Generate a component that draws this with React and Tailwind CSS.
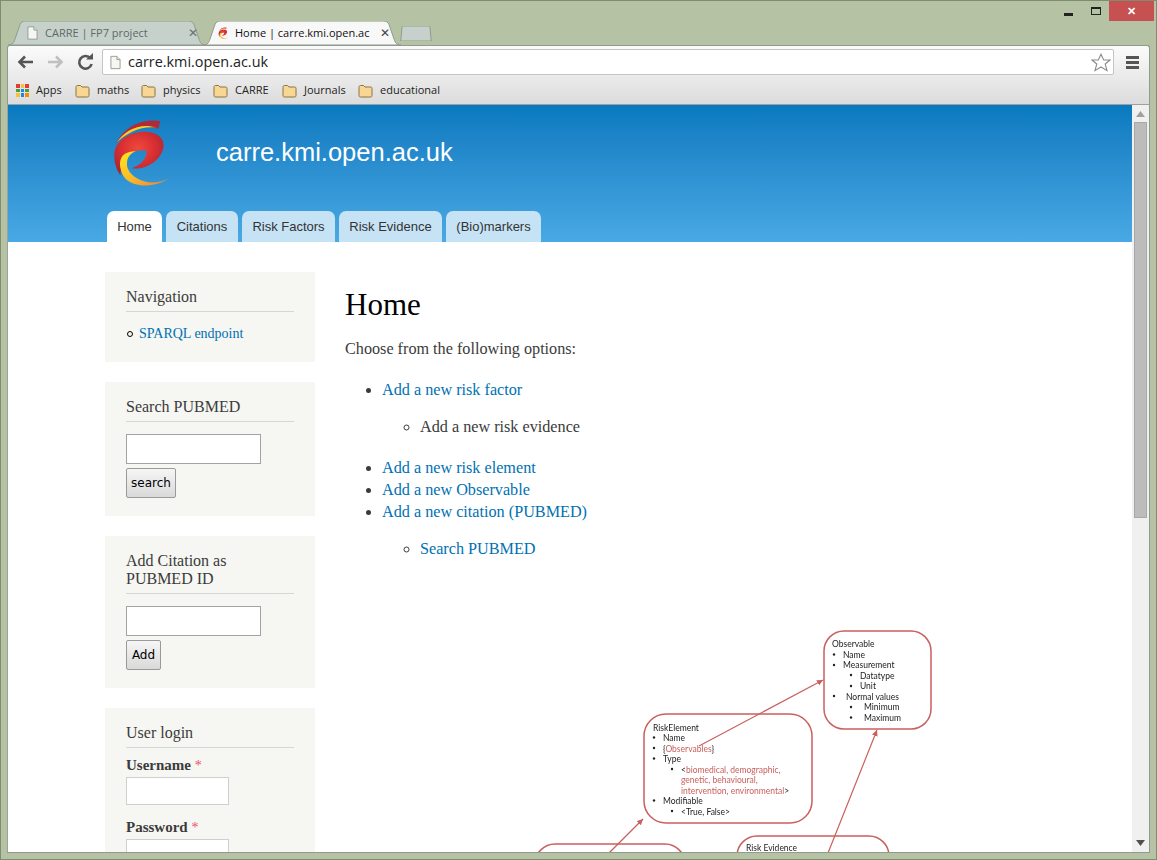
import React from "react";

const serif = "font-['Liberation_Serif',serif]";

function Logo({ className, id = "m" }) {
  return (
    <svg viewBox="0 0 210 225" className={className}>
      <defs>
        <radialGradient id={`lg${id}`} cx="0.48" cy="0.38" r="0.62">
          <stop offset="0" stopColor="#f04a3a" />
          <stop offset="0.55" stopColor="#d92f34" />
          <stop offset="1" stopColor="#a9262f" />
        </radialGradient>
        <linearGradient id={`ly${id}`} x1="0.1" y1="0" x2="0.9" y2="1">
          <stop offset="0" stopColor="#ffe41c" />
          <stop offset="0.55" stopColor="#fbb92a" />
          <stop offset="1" stopColor="#e8873a" />
        </linearGradient>
      </defs>
      <path d="M33 85C55 40 105 8 166 18L160 41C110 26 70 45 33 85Z" fill="#b12a37" />
      <path d="M35 82C60 45 105 22 156 38C110 32 72 50 35 82Z" fill={`url(#ly${id})`} />
      <path d="M28 118C30 78 70 50 122 50C160 52 180 72 175 98C168 135 125 165 80 160C105 150 125 135 125 108C95 100 62 118 52 148C48 160 46 172 47 182C34 165 27 140 28 118Z" fill={`url(#lg${id})`} />
      <path d="M92 109C68 118 62 140 68 160C82 195 138 218 192 190C150 218 90 220 60 190C40 160 40 128 60 116C70 111 82 108 92 109Z" fill={`url(#ly${id})`} />
    </svg>
  );
}

function Folder() {
  return (
    <svg width="15" height="14" viewBox="0 0 15 14" className="shrink-0">
      <path d="M1 3.5C1 2 1.6 1.5 2.5 1.5H5.5L7 3H12.5C13.5 3 14 3.5 14 4.5V11.5C14 12.5 13.5 13 12.5 13H2.5C1.5 13 1 12.5 1 11.5Z" fill="#f8d694" stroke="#8a7440" />
    </svg>
  );
}

function DocIcon({ className }) {
  return (
    <svg viewBox="0 0 12 15" className={className}>
      <path d="M1 .8H7.5L11 4.3V14.2H1Z" fill="#f6f6f2" stroke="#8f9a8f" />
      <path d="M7.5 .8V4.3H11" fill="#e6e6e6" stroke="#8f9a8f" />
    </svg>
  );
}

function TabShape({ fill, stroke }) {
  return (
    <svg className="absolute inset-0 h-full w-full" viewBox="0 0 200 25" preserveAspectRatio="none">
      <path d="M0 25C5 25 6 22 7 19L12 4C13 1 15 0 18 0H182C185 0 187 1 188 4L193 19C194 22 195 25 200 25Z" fill={fill} stroke={stroke} vectorEffect="non-scaling-stroke" />
    </svg>
  );
}

function Bookmark({ label, w }) {
  return (
    <div className="flex items-center gap-[7px]" style={{ width: w }}>
      <Folder />
      <span>{label}</span>
    </div>
  );
}

function Block({ title, children, className = "" }) {
  return (
    <div className={`bg-[#f6f6f2] px-[21px] pt-[16px] w-[210px] ${className}`}>
      <h2 className="text-[16px] leading-[18px] text-[#3b3b3b] pb-[5px] border-b border-[#d6d6d6]">{title}</h2>
      {children}
    </div>
  );
}

function Field() {
  return <input className="block w-[135px] h-[30px] bg-white border border-[#a3a3a3]" />;
}

function Btn({ label, w }) {
  return (
    <button style={{ width: w }} className="block mt-[4px] h-[30px] rounded-[2px] border border-[#9a9a9a] bg-gradient-to-b from-[#f6f6f6] to-[#d9d9d9] text-[12px] text-black font-['DejaVu_Sans',sans-serif]">
      {label}
    </button>
  );
}

const A = ({ children }) => <a className="text-[#0071b3]">{children}</a>;

function Diagram() {
  const red = "#c9605d";
  const t = (x, y, s, fill = "#222") => (
    <text x={x} y={y} fill={fill} fontSize="8.5" fontFamily="Lato,sans-serif">{s}</text>
  );
  const dot = (x, y) => <circle cx={x} cy={y} r="1.2" fill="#222" />;
  const R = ({ children }) => <tspan fill={red}>{children}</tspan>;
  return (
    <svg width="420" height="240" viewBox="530 620 420 240" className="block ml-[185px] mt-[60px] blur-[0.35px]">
      <defs>
        <marker id="ah" markerWidth="7" markerHeight="7" refX="5" refY="2.5" orient="auto">
          <path d="M0 0L5 2.5L0 5Z" fill={red} />
        </marker>
      </defs>
      <g fill="#fff" stroke={red} strokeWidth="1.5">
        <rect x="824" y="631" width="107" height="98" rx="20" />
        <rect x="644" y="714" width="168" height="109" rx="22" />
        <rect x="535" y="844" width="150" height="60" rx="20" />
        <rect x="737" y="836" width="152" height="60" rx="20" />
      </g>
      <g stroke={red} strokeWidth="1.2">
        <line x1="699" y1="746" x2="823" y2="680" markerEnd="url(#ah)" />
        <line x1="609" y1="853" x2="643" y2="819" markerEnd="url(#ah)" />
        <line x1="828" y1="853" x2="877" y2="730" markerEnd="url(#ah)" />
      </g>
      {t(832, 647, "Observable")}
      {dot(834, 654.5)}{t(843, 658, "Name")}
      {dot(834, 665)}{t(843, 668, "Measurement")}
      {dot(851, 675)}{t(860, 678.5, "Datatype")}
      {dot(851, 686)}{t(860, 689, "Unit")}
      {dot(834, 696)}{t(846, 699.5, "Normal values")}
      {dot(851, 707)}{t(864, 710, "Minimum")}
      {dot(851, 717.5)}{t(864, 721, "Maximum")}

      {t(653, 731, "RiskElement")}
      {dot(654, 737.5)}{t(663, 741, "Name")}
      {dot(654, 748)}{t(663, 752, <>{"{"}<R>Observables</R>{"}"}</>)}
      {dot(654, 758.5)}{t(663, 762, "Type")}
      {dot(672, 769)}{t(681, 773, <>{"<"}<R>biomedical, demographic,</R></>)}
      {t(681, 783, "genetic, behavioural,", red)}
      {t(681, 793.5, <><R>intervention, environmental</R>{">"}</>)}
      {dot(654, 800.5)}{t(663, 804, "Modifiable")}
      {dot(672, 811)}{t(681, 814.5, "<True, False>")}
      {t(746, 851, "Risk Evidence")}
    </svg>
  );
}

export default function App() {
  return (
    <div className="w-[1157px] h-[860px] overflow-hidden bg-[#b5c2a3] border border-[#7f8c70] flex flex-col font-['Open_Sans',sans-serif]">
      {/* title bar */}
      <div className="h-[44px] shrink-0 flex relative">
        <div className="flex items-end pl-[7px] h-full">
          <div className="relative w-[198px] h-[24px] text-[11px] text-[#5d6a62]">
            <TabShape fill="#c7d1cc" stroke="#8f9b8f" />
            <div className="relative flex items-center h-full pl-[19px] pr-[8px]">
              <DocIcon className="w-[11px] h-[14px] mr-[7px]" />
              <span className="flex-1">CARRE | FP7 project</span>
              <span className="text-[12px] text-[#67726a]">✕</span>
            </div>
          </div>
          <div className="relative w-[198px] -ml-[3px] h-[24px] text-[11px] text-[#111]">
            <TabShape fill="#f8f8f8" stroke="#8f9b8f" />
            <div className="relative flex items-center h-full pl-[14px] pr-[11px]">
              <Logo id="f" className="w-[12px] h-[14px] mr-[6px] shrink-0" />
              <span className="flex-1 whitespace-nowrap">Home | carre.kmi.open.ac</span>
              <span className="text-[12px] text-[#444] ml-[5px]">✕</span>
            </div>
          </div>
          <div className="relative w-[32px] h-[15px] mb-[4px] -ml-px">
            <TabShape fill="#c7d1cc" stroke="#8f9b8f" />
          </div>
        </div>
        <div className="ml-auto mr-[2px] flex items-start">
          <div className="w-[9px] h-[3px] bg-[#222] mt-[12px] mr-[18px]" />
          <div className="w-[10px] h-[8px] border border-[#222] border-t-2 mt-[6px] mr-[8px]" />
          <div className="w-[45px] h-[20px] bg-[#c75050] flex items-center justify-center text-white text-[11px] font-bold">✕</div>
        </div>
      </div>

      {/* window */}
      <div className="ml-[6px] w-[1143px] flex-1 min-h-0 flex flex-col">
        <div className="shrink-0 h-[60px] rounded-t-[3px] border-t border-x border-[#8f9b8f] bg-gradient-to-b from-[#fbfbfb] to-[#dcdcdc] border-b border-b-[#a0a0a0]">
          <div className="h-[32px] flex items-center relative">
            <svg width="90" height="20" viewBox="0 0 90 20" className="ml-[8px] shrink-0">
              <path d="M17 10H4M9 4.5L3.5 10L9 15.5" fill="none" stroke="#555" strokeWidth="2.6" />
              <path d="M32 10H45M40 4.5L45.5 10L40 15.5" fill="none" stroke="#c0c0c0" strokeWidth="2.6" />
              <path d="M74.5 6.5A6.3 6.3 0 1 0 75.6 12" fill="none" stroke="#555" strokeWidth="2.6" />
              <path d="M70 7.5H77V1Z" fill="#555" />
            </svg>
            <div className="ml-[-4px] w-[1012px] h-[26px] bg-white border border-[#c4c4c4] rounded-[2px] flex items-center pl-[7px]">
              <DocIcon className="w-[11px] h-[15px] mr-[7px]" />
              <span className="text-[14.4px] text-[#222]">carre.kmi.open.ac.uk</span>
              <svg width="20" height="19" viewBox="0 0 20 19" className="ml-auto mr-[2px]">
                <path d="M10 1.2L12.7 7H19L14.2 11L16 17.6L10 14L4 17.6L5.8 11L1 7H7.3Z" fill="#fff" stroke="#8a8a8a" strokeWidth="1.1" />
              </svg>
            </div>
            <div className="ml-[12px] w-[13px] flex flex-col gap-[2px]">
              <div className="h-[3px] bg-[#555]" /><div className="h-[3px] bg-[#555]" /><div className="h-[3px] bg-[#555]" />
            </div>
          </div>
          <div className="h-[27px] flex items-center pl-[8px] pb-[2px] text-[11px] text-[#222]">
            <div className="flex items-center gap-[7px] w-[59px]">
              <div className="grid grid-cols-3 gap-px w-[13px] shrink-0">
                {["#e53935","#fbc02d","#e53935","#43a047","#1e88e5","#43a047","#fbc02d","#1e88e5","#fb8c00"].map((c, i) => (
                  <div key={i} className="h-[3.5px]" style={{ background: c }} />
                ))}
              </div>
              <span>Apps</span>
            </div>
            <Bookmark label="maths" w={66} />
            <Bookmark label="physics" w={72} />
            <Bookmark label="CARRE" w={69} />
            <Bookmark label="Journals" w={76} />
            <Bookmark label="educational" w={90} />
          </div>
        </div>

        {/* page */}
        <div className="h-[747px] shrink-0 flex bg-white overflow-hidden border-l border-[#9aa59a]">
          <div className="w-[1124px] shrink-0 overflow-hidden">
            <header className="h-[137px] bg-gradient-to-b from-[#0779bf] to-[#48a9e4] flex flex-col font-['Liberation_Sans',sans-serif]">
              <div className="flex-1 flex pl-[97px]">
                <Logo className="w-[70px] h-[75px] mt-[10px] shrink-0" />
                <div className="ml-[41px] mt-[32px] text-[25.5px] leading-[30px] text-white">carre.kmi.open.ac.uk</div>
              </div>
              <nav className="h-[31px] flex gap-[4px] pl-[99px] text-[13px] text-[#333]">
                {[["Home",55,"bg-white"],["Citations",72,"bg-[#c6e2f5]"],["Risk Factors",93,"bg-[#c6e2f5]"],["Risk Evidence",103,"bg-[#c6e2f5]"],["(Bio)markers",95,"bg-[#c6e2f5]"]].map(([l,w,bg]) => (
                  <div key={l} style={{ width: w }} className={`${bg} rounded-t-[7px] flex items-center justify-center`}>{l}</div>
                ))}
              </nav>
            </header>
            <div className={`flex ${serif} text-[#3b3b3b]`}>
              <aside className="ml-[97px] mt-[30px] w-[210px] shrink-0 flex flex-col gap-[20px]">
                <Block title="Navigation" className="h-[90px]">
                  <div className="flex items-center mt-[11px] text-[14px] leading-[22px]">
                    <span className="w-[6px] h-[6px] rounded-full border border-black ml-px mr-[6px]" />
                    <A>SPARQL endpoint</A>
                  </div>
                </Block>
                <Block title="Search PUBMED" className="h-[134px]">
                  <div className="mt-[12px]"><Field /><Btn label="search" w={50} /></div>
                </Block>
                <Block title={<>Add Citation as<br />PUBMED ID</>} className="h-[152px]">
                  <div className="mt-[12px]"><Field /><Btn label="Add" w={35} /></div>
                </Block>
                <Block title="User login" className="h-[200px]">
                  <div className="mt-[7px] text-[15px] leading-[20px] font-bold">Username <span className="text-[#f0506a] text-[14px] font-normal">*</span></div>
                  <input className="block w-[103px] h-[28px] bg-white border border-[#cfcfcf] mt-px" />
                  <div className="mt-[12px] text-[15px] leading-[20px] font-bold">Password <span className="text-[#f0506a] text-[14px] font-normal">*</span></div>
                  <input className="block w-[103px] h-[28px] bg-white border border-[#cfcfcf] mt-px" />
                </Block>
              </aside>
              <main className="ml-[30px] flex-1 text-[16.2px] leading-[22px]">
                <h1 className="mt-[45px] text-[31px] leading-[36px] text-black">Home</h1>
                <p className="mt-[15px]">Choose from the following options:</p>
                <ul className="mt-[19px] ml-[37px] list-disc">
                  <li><A>Add a new risk factor</A>
                    <ul className="mt-[15px] mb-[19px] ml-[38px] list-[circle]"><li>Add a new risk evidence</li></ul>
                  </li>
                  <li><A>Add a new risk element</A></li>
                  <li><A>Add a new Observable</A></li>
                  <li><A>Add a new citation (PUBMED)</A>
                    <ul className="mt-[15px] ml-[38px] list-[circle]"><li><A>Search PUBMED</A></li></ul>
                  </li>
                </ul>
                <Diagram />
              </main>
            </div>
          </div>
          <div className="flex-1 bg-[#f0f0f0] flex flex-col items-center relative">
            <svg width="9" height="6" viewBox="0 0 9 6" className="mt-[6px]"><path d="M4.5 0L9 6H0Z" fill="#a0a0a0" /></svg>
            <div className="w-[13px] h-[396px] mt-[5px] bg-[#bcbcbc] border border-[#a8a8a8]" />
            <svg width="9" height="6" viewBox="0 0 9 6" className="mt-auto mb-[6px]"><path d="M4.5 6L9 0H0Z" fill="#505050" /></svg>
          </div>
          <div className="w-px bg-[#8f9b8f]" />
        </div>
        <div className="h-px bg-[#8f9b8f] shrink-0" />
      </div>
    </div>
  );
}
